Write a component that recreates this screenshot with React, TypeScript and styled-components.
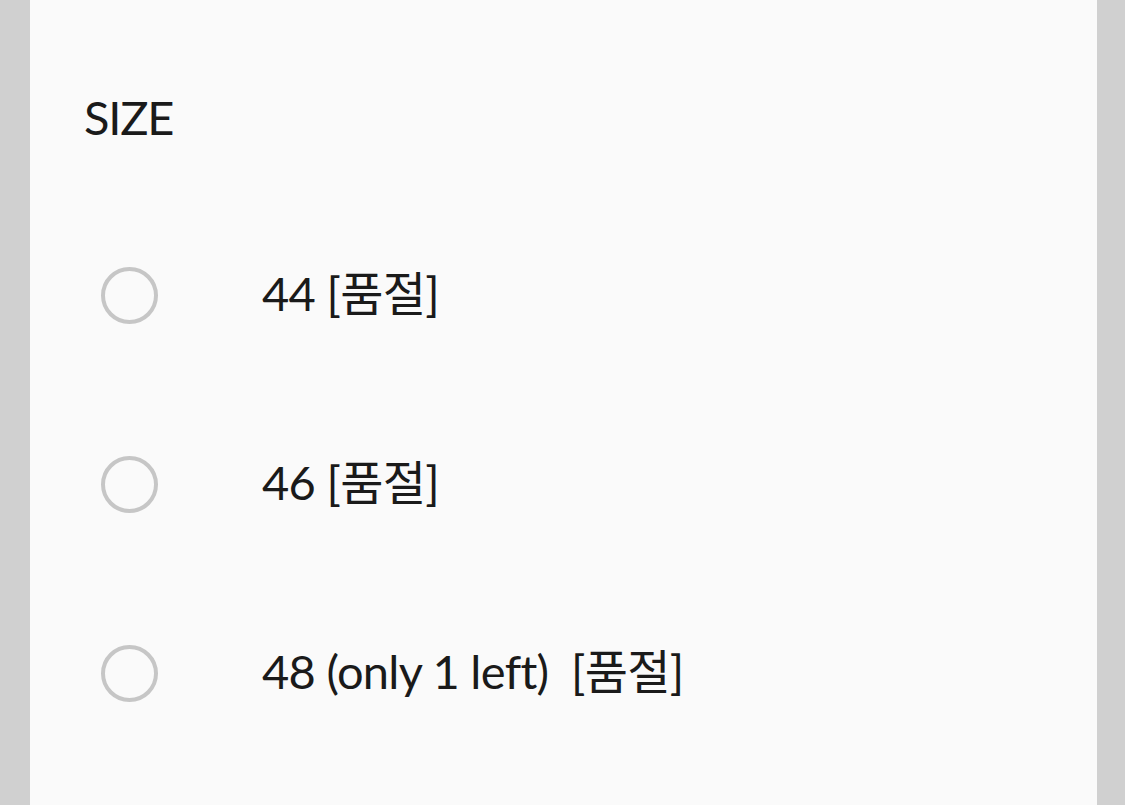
import React from "react";
import styled, { createGlobalStyle } from "styled-components";

const GlobalStyle = createGlobalStyle`
  html, body {
    margin: 0;
    padding: 0;
    background: #d0d0d0;
  }
  body {
    font-family: Lato, "Noto Sans CJK KR", sans-serif;
    color: #1a1a1a;
  }
`;

const StyledPage = styled.div`
  display: flex;
  justify-content: flex-start;
  height: 805px;
  overflow: hidden;
  padding: 0 28px 0 30px;
  box-sizing: border-box;
`;

const StyledPanel = styled.div`
  flex: 1;
  background: #fafafa;
  padding: 82px 0 0 54px;
  box-sizing: border-box;
`;

const StyledTitle = styled.div`
  font-size: 47px;
  line-height: 70px;
  letter-spacing: -1.2px;
  margin-bottom: 49px;
`;

const StyledList = styled.div`
  display: flex;
  flex-direction: column;
`;

const StyledOption = styled.label`
  display: flex;
  align-items: center;
  height: 189px;
  cursor: pointer;
`;

const StyledRadio = styled.span<{ checked?: boolean }>`
  width: 57px;
  height: 57px;
  margin-left: 17px;
  border-radius: 50%;
  border: 4px solid ${(p) => (p.checked ? "#3e91ff" : "#c6c6c6")};
  box-sizing: border-box;
  flex-shrink: 0;
`;

const StyledLabel = styled.span`
  margin-left: 104px;
  font-size: 47px;
  letter-spacing: -0.7px;
  white-space: pre;
  line-height: 1;
  padding-bottom: 4px;
`;

const sizes = ["44 [품절]", "46 [품절]", "48 (only 1 left)  [품절]"];

export default function App() {
  return (
    <>
      <GlobalStyle />
      <StyledPage>
        <StyledPanel>
          <StyledTitle>SIZE</StyledTitle>
          <StyledList>
            {sizes.map((s) => (
              <StyledOption key={s}>
                <StyledRadio />
                <StyledLabel>{s}</StyledLabel>
              </StyledOption>
            ))}
          </StyledList>
        </StyledPanel>
      </StyledPage>
    </>
  );
}
